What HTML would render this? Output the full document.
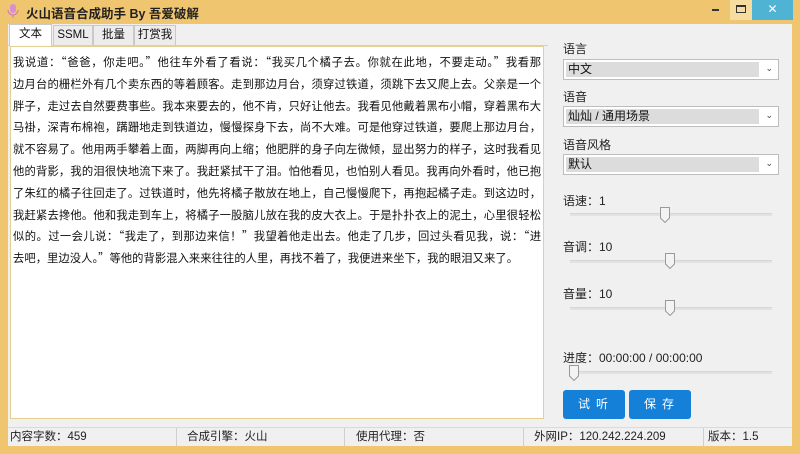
<!DOCTYPE html>
<html><head><meta charset="utf-8"><style>
*{margin:0;padding:0;box-sizing:border-box}
body{width:800px;height:454px;background:#f0c56f;font-family:"Liberation Sans","Microsoft YaHei","Noto Sans CJK SC",sans-serif;position:relative;overflow:hidden;font-size:12px;color:#111}
.a{position:absolute}
.title{left:26px;top:3px;font-size:12.5px;font-weight:bold;color:#222}
.client{left:8px;top:24px;width:784px;height:422px;background:#f0f0f0}
.tab{top:25px;height:20px;border:1px solid #c9c9c9;border-bottom:none;background:#ececec;font-size:11.5px;text-align:center;line-height:18px}
.tab.on{background:#fff;top:24px;height:22px}
.ta{left:10px;top:46px;width:534px;height:373px;background:#fff;border:1px solid #e6cf95}
.txt{left:13px;top:52px;width:530px;font-size:11.3px;line-height:21.8px;color:#111;font-family:"Microsoft YaHei","Noto Sans CJK SC",sans-serif}
.txt div{white-space:nowrap;text-align:justify;text-align-last:justify;width:528px;overflow:hidden}
.lbl{left:563px;font-size:12px;color:#222}
.sel{left:563px;width:216px;height:21px;background:#fff;border:1px solid #bdbdbd}
.sel .in{position:absolute;left:2px;top:2px;width:193px;height:15px;background:#dcdcdc;font-size:12px;line-height:15px;padding-left:2px}
.sel .ar{position:absolute;right:5px;top:3px;font-size:9px;color:#444}
.track{left:570px;width:202px;height:3px;background:#e2e2e2;border-top:1px solid #d6d6d6}
.thumb{width:10px;height:16px}
.btn{top:390px;height:29px;background:#1580d8;color:#fff;border-radius:3px;font-size:12px;text-align:center;line-height:29px;letter-spacing:6px;padding-left:4px}
.st{top:429px;height:17px;font-size:11.5px;line-height:17px;color:#222}
.sep{top:428px;width:1px;height:18px;background:#cfcfcf}
</style></head><body>
<svg class="a" style="left:6px;top:3px" width="14" height="16"><rect x="4" y="1" width="6" height="9" rx="3" fill="#d98fd0"/><path d="M2 7a5 5 0 0 0 10 0M7 12v3" stroke="#c77ac0" fill="none"/></svg>
<div class="a title">火山语音合成助手 By 吾爱破解</div>
<div class="a" style="left:712px;top:9px;width:7px;height:2px;background:#333"></div>
<div class="a" style="left:730px;top:0;width:22px;height:20px;background:#f6dc9f"></div>
<div class="a" style="left:736px;top:5px;width:10px;height:8px;border:1px solid #333;border-top-width:2px"></div>
<div class="a" style="left:752px;top:0;width:41px;height:20px;background:#4fb3d3;color:#fff;text-align:center;font-size:12px;line-height:19px">✕</div>
<div class="a client"></div>
<div class="a" style="left:8px;top:45px;width:540px;height:1px;background:#d0d0d0"></div>
<div class="a tab on" style="left:9px;width:43px">文本</div>
<div class="a tab" style="left:53px;width:40px">SSML</div>
<div class="a tab" style="left:93px;width:41px">批量</div>
<div class="a tab" style="left:134px;width:42px">打赏我</div>
<div class="a ta"></div>
<div class="a txt"><div>我说道：“爸爸，你走吧。”他往车外看了看说：“我买几个橘子去。你就在此地，不要走动。”我看那</div><div>边月台的栅栏外有几个卖东西的等着顾客。走到那边月台，须穿过铁道，须跳下去又爬上去。父亲是一个</div><div>胖子，走过去自然要费事些。我本来要去的，他不肯，只好让他去。我看见他戴着黑布小帽，穿着黑布大</div><div>马褂，深青布棉袍，蹒跚地走到铁道边，慢慢探身下去，尚不大难。可是他穿过铁道，要爬上那边月台，</div><div>就不容易了。他用两手攀着上面，两脚再向上缩；他肥胖的身子向左微倾，显出努力的样子，这时我看见</div><div>他的背影，我的泪很快地流下来了。我赶紧拭干了泪。怕他看见，也怕别人看见。我再向外看时，他已抱</div><div>了朱红的橘子往回走了。过铁道时，他先将橘子散放在地上，自己慢慢爬下，再抱起橘子走。到这边时，</div><div>我赶紧去搀他。他和我走到车上，将橘子一股脑儿放在我的皮大衣上。于是扑扑衣上的泥土，心里很轻松</div><div>似的。过一会儿说：“我走了，到那边来信！”我望着他走出去。他走了几步，回过头看见我，说：“进</div><div style="width:505px">去吧，里边没人。”等他的背影混入来来往往的人里，再找不着了，我便进来坐下，我的眼泪又来了。</div></div>

<div class="a lbl" style="top:40px">语言</div>
<div class="a sel" style="top:59px"><div class="in">中文</div><div class="ar">&#8964;</div></div>
<div class="a lbl" style="top:88px">语音</div>
<div class="a sel" style="top:106px"><div class="in">灿灿 / 通用场景</div><div class="ar">&#8964;</div></div>
<div class="a lbl" style="top:136px">语音风格</div>
<div class="a sel" style="top:154px"><div class="in">默认</div><div class="ar">&#8964;</div></div>

<div class="a lbl" style="top:192px">语速：1</div>
<div class="a track" style="top:213px"></div>
<svg class="a thumb" style="left:660px;top:207px" viewBox="0 0 10 16"><path d="M0.5 0.5H9.5V11L5 15.5 0.5 11Z" fill="#f3f3f3" stroke="#999"/></svg>
<div class="a lbl" style="top:238px">音调：10</div>
<div class="a track" style="top:260px"></div>
<svg class="a thumb" style="left:665px;top:253px" viewBox="0 0 10 16"><path d="M0.5 0.5H9.5V11L5 15.5 0.5 11Z" fill="#f3f3f3" stroke="#999"/></svg>
<div class="a lbl" style="top:285px">音量：10</div>
<div class="a track" style="top:307px"></div>
<svg class="a thumb" style="left:665px;top:300px" viewBox="0 0 10 16"><path d="M0.5 0.5H9.5V11L5 15.5 0.5 11Z" fill="#f3f3f3" stroke="#999"/></svg>
<div class="a lbl" style="top:349px">进度：00:00:00 / 00:00:00</div>
<div class="a track" style="top:371px"></div>
<svg class="a thumb" style="left:569px;top:365px" viewBox="0 0 10 16"><path d="M0.5 0.5H9.5V11L5 15.5 0.5 11Z" fill="#f3f3f3" stroke="#999"/></svg>
<div class="a btn" style="left:563px;width:62px">试听</div>
<div class="a btn" style="left:629px;width:62px">保存</div>

<div class="a" style="left:8px;top:427px;width:784px;height:1px;background:#dadada"></div>
<div class="a st" style="left:10px">内容字数：459</div>
<div class="a sep" style="left:176px"></div>
<div class="a st" style="left:187px">合成引擎：火山</div>
<div class="a sep" style="left:344px"></div>
<div class="a st" style="left:356px">使用代理：否</div>
<div class="a sep" style="left:523px"></div>
<div class="a st" style="left:534px">外网IP：120.242.224.209</div>
<div class="a sep" style="left:703px"></div>
<div class="a st" style="left:708px">版本：1.5</div>
</body></html>
